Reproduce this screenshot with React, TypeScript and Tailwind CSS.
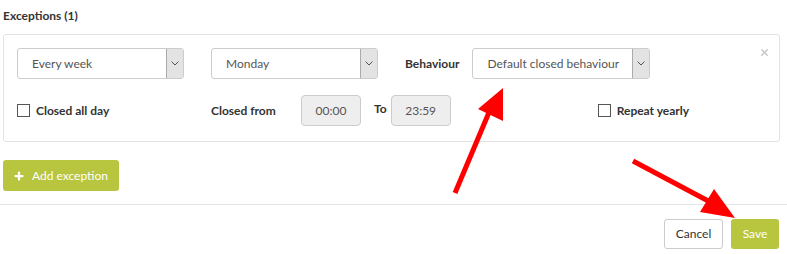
import { Plus, X } from "lucide-react";

function Select({ value, width }: { value: string; width: string }) {
  return (
    <div className={`flex h-[31px] ${width} rounded-[3px] border border-[#ccc] bg-white`}>
      <div className="flex flex-1 items-center pl-[14px] text-[12px] text-[#555]">{value}</div>
      <div className="flex w-[17px] items-center justify-center border-l border-[#aaa] bg-[#e3e3e3]">
        <svg width="8" height="5" viewBox="0 0 8 5" fill="none">
          <path d="M0.5 0.5 L4 4 L7.5 0.5" stroke="#555" strokeWidth="1" />
        </svg>
      </div>
    </div>
  );
}

function TimeBox({ value }: { value: string }) {
  return (
    <div className="flex h-[31px] w-[60px] items-center justify-center rounded-[4px] border border-[#ccc] bg-[#eee] text-[12px] text-[#555]">
      {value}
    </div>
  );
}

function Check({ label }: { label: string }) {
  return (
    <label className="flex items-center gap-[6px] text-[12px] font-bold text-[#333]">
      <span className="h-[13px] w-[13px] border border-[#555] bg-white" />
      {label}
    </label>
  );
}

export default function App() {
  return (
    <div
      className="relative h-[254px] w-[787px] overflow-hidden bg-white"
      style={{ fontFamily: "Lato, 'Open Sans', sans-serif" }}
    >
      <div className="px-[3px] pt-[7px]">
        <h3 className="text-[12px] font-bold text-[#333]">Exceptions (1)</h3>

        {/* exception panel */}
        <div className="relative mt-[9px] h-[108px] w-[777px] rounded-[3px] border border-[#e3e3e3] px-[13px] pt-[13px]">
          <button className="absolute right-[9px] top-[12px] text-[#c5c5c5]">
            <X className="h-[11px] w-[11px]" strokeWidth={3} />
          </button>
          <div className="flex items-center">
            <Select value="Every week" width="w-[167px]" />
            <div className="w-[27px]" />
            <Select value="Monday" width="w-[167px]" />
            <span className="ml-[27px] mr-[13px] text-[12px] font-bold text-[#333]">Behaviour</span>
            <Select value="Default closed behaviour" width="w-[178px]" />
          </div>
          <div className="mt-[16px] flex items-center">
            <div className="w-[194px]">
              <Check label="Closed all day" />
            </div>
            <span className="w-[90px] text-[12px] font-bold text-[#333]">Closed from</span>
            <TimeBox value="00:00" />
            <span className="ml-[13px] mr-[4px] -translate-y-[2px] text-[12px] font-bold text-[#333]">To</span>
            <TimeBox value="23:59" />
            <div className="ml-[147px]">
              <Check label="Repeat yearly" />
            </div>
          </div>
        </div>

        <button className="mt-[18px] flex h-[31px] w-[116px] items-center gap-[7px] rounded-[3px] bg-[#b8c53f] pl-[10px] text-[12px] text-white">
          <Plus className="h-[12px] w-[12px]" strokeWidth={4.5} />
          Add exception
        </button>
      </div>

      <div className="mt-[13px] border-t border-[#e5e5e5]" />

      <div className="mt-[14px] flex justify-end gap-[8px] pr-[8px]">
        <button className="h-[30px] w-[59px] rounded-[3px] border border-[#ccc] bg-white text-[12px] text-[#333]">
          Cancel
        </button>
        <button className="h-[30px] w-[48px] rounded-[3px] bg-[#b8c53f] text-[12px] text-white">
          Save
        </button>
      </div>

      {/* red annotation arrows */}
      <svg className="pointer-events-none absolute left-0 top-0" width="787" height="254">
        <line x1="455" y1="193" x2="490" y2="110" stroke="#ff0000" strokeWidth="5" />
        <polygon points="503,88 478,109 503,121" fill="#ff0000" />
        <line x1="633" y1="161" x2="712" y2="203" stroke="#ff0000" strokeWidth="5" />
        <polygon points="735,218 700,212 714,189" fill="#ff0000" />
      </svg>
    </div>
  );
}
